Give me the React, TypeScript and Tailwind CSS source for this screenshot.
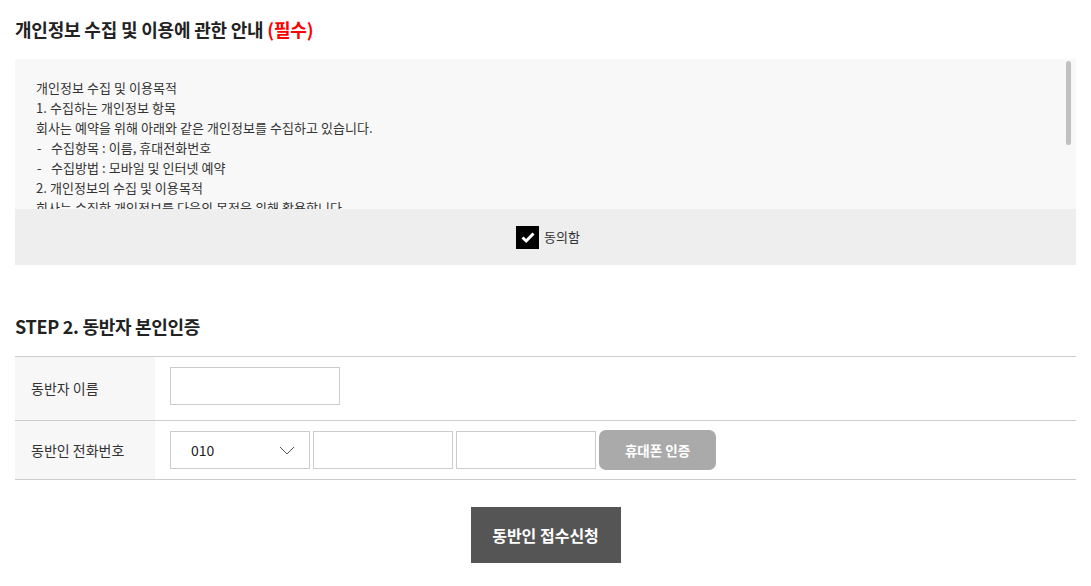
import { useState } from "react";

const FONT = "font-['Noto_Sans_CJK_KR','Noto_Sans',sans-serif]";

const TERMS: string[] = [
  "개인정보 수집 및 이용목적",
  "1. 수집하는 개인정보 항목",
  "회사는 예약을 위해 아래와 같은 개인정보를 수집하고 있습니다.",
  "-|수집항목 : 이름, 휴대전화번호",
  "-|수집방법 : 모바일 및 인터넷 예약",
  "2. 개인정보의 수집 및 이용목적",
  "회사는 수집한 개인정보를 다음의 목적을 위해 활용합니다.",
  "-|예약 확인 및 안내",
  "3. 개인정보의 보유 및 이용기간"
];

function TermsBox() {
  return (
    <div className="relative h-[150px] overflow-hidden bg-[#f8f8f8]">
      <div className="px-[21px] pt-[19px] text-[13px] leading-[20px] tracking-[0.05px] text-[#333]">
        {TERMS.map((line) =>
          line.startsWith("-|") ? (
            <p key={line} className="flex">
              <span className="w-[15px] pl-[1px]">-</span>
              <span>{line.slice(2)}</span>
            </p>
          ) : (
            <p key={line}>{line}</p>
          )
        )}
      </div>
      {/* fake scrollbar thumb */}
      <div className="absolute right-[5px] top-[2px] h-[84px] w-[5px] rounded-full bg-[#c1c1c1]" />
    </div>
  );
}

function AgreeBar() {
  const [checked, setChecked] = useState(true);
  return (
    <div className="flex h-[56px] items-center justify-center bg-[#eeeeee] pl-[5px]">
      <label className="flex cursor-pointer items-center gap-[5px]">
        <button
          type="button"
          onClick={() => setChecked(!checked)}
          className="flex h-[23px] w-[23px] items-center justify-center bg-black"
        >
          {checked ? (
            <svg width="16" height="16" viewBox="0 0 16 16">
              <path d="M2.5 8.5 L6.2 12 L13.5 4.5" fill="none" stroke="#fff" strokeWidth="3" />
            </svg>
          ) : null}
        </button>
        <span className="text-[13px] text-[#333]">동의함</span>
      </label>
    </div>
  );
}

export default function App() {
  return (
    <div className={`${FONT} bg-white px-[15px] pt-[16px] pb-[23px] text-[#222]`}>
      <h2 className="mb-[17px] text-[18px] font-bold leading-[26px] tracking-[-0.2px]">
        개인정보 수집 및 이용에 관한 안내 <span className="text-[#ff0000]">(필수)</span>
      </h2>
      <TermsBox />
      <AgreeBar />

      <h2 className="mt-[48px] mb-[17px] text-[18px] font-bold leading-[26px] tracking-[-0.3px]">
        STEP 2. 동반자 본인인증
      </h2>

      <div className="border-t border-[#cccccc]">
        <div className="flex h-[64px] border-b border-[#cccccc]">
          <div className="flex w-[140px] items-center bg-[#f7f7f7] pl-[16px] text-[14px] text-[#333]">
            동반자 이름
          </div>
          <div className="pl-[15px] pt-[10px]">
            <input className="h-[38px] w-[170px] border border-[#cccccc] bg-white outline-none" />
          </div>
        </div>
        <div className="flex h-[59px] border-b border-[#cccccc]">
          <div className="flex w-[140px] items-center bg-[#f7f7f7] pl-[16px] text-[14px] text-[#333]">
            동반인 전화번호
          </div>
          <div className="flex items-center gap-[3px] pl-[15px]">
            <div className="flex h-[38px] w-[140px] items-center justify-between border border-[#cccccc] bg-white pl-[20px] pr-[14px] text-[14px] text-[#222]">
              <span>010</span>
              <svg width="16" height="9" viewBox="0 0 16 9">
                <path d="M1 1 L8 8 L15 1" fill="none" stroke="#555" strokeWidth="1" />
              </svg>
            </div>
            <input className="h-[38px] w-[140px] border border-[#cccccc] bg-white outline-none" />
            <input className="h-[38px] w-[140px] border border-[#cccccc] bg-white outline-none" />
            <button
              type="button"
              className="h-[40px] w-[117px] rounded-[7px] bg-[#aaaaaa] text-[13.5px] font-bold text-white"
            >
              휴대폰 인증
            </button>
          </div>
        </div>
      </div>

      <div className="mt-[27px] flex justify-center">
        <button
          type="button"
          className="h-[56px] w-[150px] bg-[#555555] text-[16px] font-bold text-white"
        >
          동반인 접수신청
        </button>
      </div>
    </div>
  );
}
